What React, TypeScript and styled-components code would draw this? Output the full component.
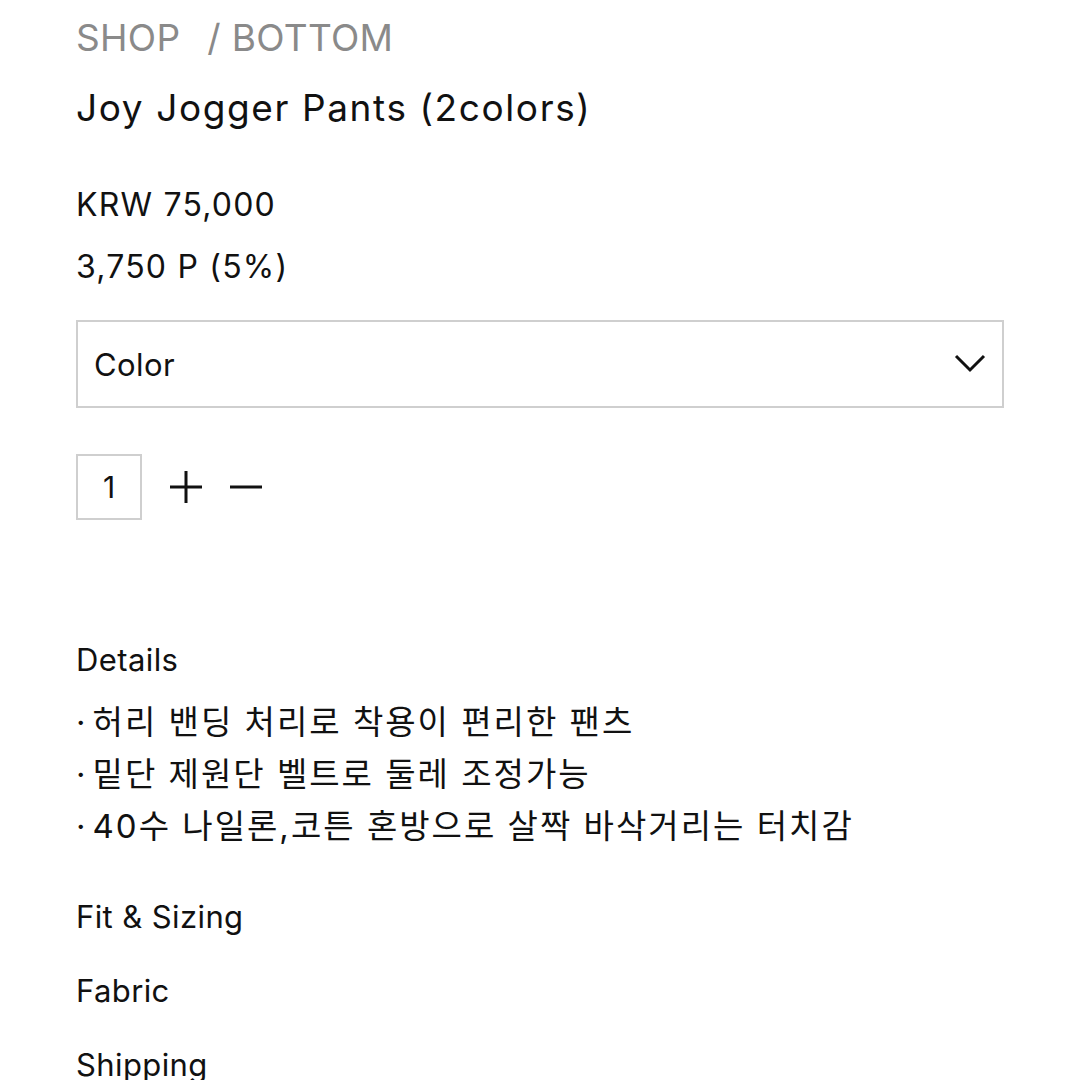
import React from 'react';
import styled, { createGlobalStyle } from 'styled-components';

const GlobalStyle = createGlobalStyle`
  body {
    margin: 0;
    padding: 0;
    background: #fff;
    font-family: Inter, "Noto Sans", "Noto Sans CJK KR", sans-serif;
    color: #111;
  }
`;

const Page = styled.div`
  width: 1080px;
  height: 1080px;
  overflow: hidden;
  padding: 0 76px;
  box-sizing: border-box;
`;

const Breadcrumb = styled.nav`
  display: flex;
  gap: 27px;
  font-size: 37px;
  line-height: 44px;
  color: #8a8a8a;
  padding-top: 16px;
  letter-spacing: 0.3px;
`;

const Title = styled.h1`
  margin: 26px 0 0;
  font-size: 37px;
  line-height: 44px;
  font-weight: 400;
  letter-spacing: 1.6px;
`;

const Prices = styled.div`
  margin-top: 44px;
`;

const Price = styled.div`
  font-size: 32px;
  line-height: 62px;
  letter-spacing: 1.2px;
`;

const Select = styled.div`
  margin-top: 22px;
  height: 88px;
  border: 2px solid #cfcfcf;
  box-sizing: border-box;
  display: flex;
  align-items: center;
  justify-content: space-between;
  padding: 0 16px;
  font-size: 31px;
  letter-spacing: 0.4px;
`;

const QtyRow = styled.div`
  margin-top: 46px;
  display: flex;
  align-items: center;
  gap: 28px;
`;

const QtyBox = styled.div`
  width: 66px;
  height: 66px;
  box-sizing: border-box;
  border: 2px solid #cfcfcf;
  display: flex;
  align-items: center;
  justify-content: center;
  font-size: 30px;
`;

const Section = styled.section`
  margin-top: 114px;
`;

const SectionTitle = styled.div`
  font-size: 31px;
  line-height: 52px;
  letter-spacing: 0.4px;
  margin-bottom: 10px;
`;

const DetailLine = styled.div`
  display: flex;
  font-size: 33px;
  line-height: 52px;
  letter-spacing: 2px;
  white-space: nowrap;
`;

const Bullet = styled.span`
  letter-spacing: 0;
  margin-right: 7px;
`;

const Accordion = styled.div`
  margin-top: 28px;
`;

const AccordionItem = styled.div`
  font-size: 31px;
  line-height: 74px;
  letter-spacing: 0.4px;
`;

const details = [
  '허리 밴딩 처리로 착용이 편리한 팬츠',
  '밑단 제원단 벨트로 둘레 조정가능',
  '40수 나일론,코튼 혼방으로 살짝 바삭거리는 터치감',
];

function Chevron() {
  return (
    <svg width="32" height="20" viewBox="0 0 32 20" fill="none">
      <path d="M2 2 L16 16 L30 2" stroke="#111" strokeWidth="3" />
    </svg>
  );
}

function Plus() {
  return (
    <svg width="32" height="32" viewBox="0 0 32 32">
      <path d="M0 16 H32 M16 0 V32" stroke="#111" strokeWidth="3" />
    </svg>
  );
}

function Minus() {
  return (
    <svg width="32" height="32" viewBox="0 0 32 32">
      <path d="M0 16 H32" stroke="#111" strokeWidth="3" />
    </svg>
  );
}

export default function App() {
  return (
    <>
      <GlobalStyle />
      <Page>
        <Breadcrumb>
          <span>SHOP</span>
          <span>/ BOTTOM</span>
        </Breadcrumb>
        <Title>Joy Jogger Pants (2colors)</Title>
        <Prices>
          <Price>KRW 75,000</Price>
          <Price>3,750 P (5%)</Price>
        </Prices>
        <Select>
          <span>Color</span>
          <Chevron />
        </Select>
        <QtyRow>
          <QtyBox>1</QtyBox>
          <Plus />
          <Minus />
        </QtyRow>
        <Section>
          <SectionTitle>Details</SectionTitle>
          {details.map((d) => (
            <DetailLine key={d}>
              <Bullet>·</Bullet>
              <span>{d}</span>
            </DetailLine>
          ))}
        </Section>
        <Accordion>
          <AccordionItem>Fit &amp; Sizing</AccordionItem>
          <AccordionItem>Fabric</AccordionItem>
          <AccordionItem>Shipping</AccordionItem>
        </Accordion>
      </Page>
    </>
  );
}
